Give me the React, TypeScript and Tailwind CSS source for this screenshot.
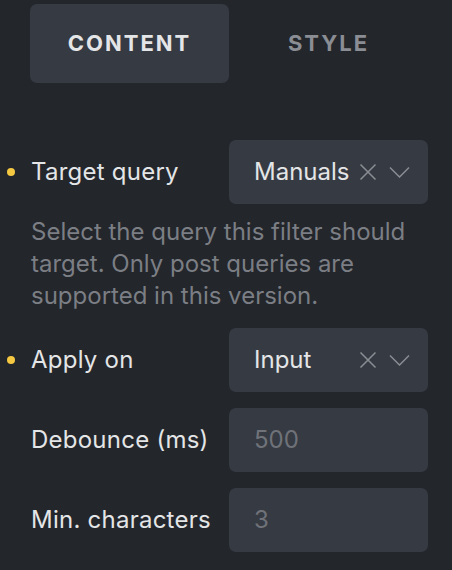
import * as React from 'react'

const XIcon = () => (
  <svg width="18" height="18" viewBox="0 0 18 18" fill="none" stroke="currentColor" strokeWidth="1.5">
    <path d="M1.5 1.5 L16.5 16.5 M16.5 1.5 L1.5 16.5" />
  </svg>
)

const ChevronIcon = () => (
  <svg width="21" height="12" viewBox="0 0 21 12" fill="none" stroke="currentColor" strokeWidth="1.5">
    <path d="M1 1.5 L10.5 11 L20 1.5" />
  </svg>
)

type RowProps = {
  label: string
  dot?: boolean
  children: React.ReactNode
}

const Row = ({ label, dot, children }: RowProps) => (
  <div className="flex items-center">
    <div className="relative flex w-[229px] shrink-0 items-center pl-[31px]">
      {dot && <span className="absolute left-[7px] h-[8px] w-[8px] rounded-full bg-[#f5c842]" />}
      <span className="text-[24px] tracking-[0.01em] text-[#e4e5e7]">{label}</span>
    </div>
    {children}
  </div>
)

const Select = ({ value }: { value: string }) => (
  <div className="flex h-[64px] w-[199px] shrink-0 items-center rounded-[7px] bg-[#363a42] pl-[25px] pr-[18px]">
    <span className="flex-1 text-[24px] text-[#e4e5e7]">{value}</span>
    <span className="mr-[12px] text-[#8a8d93]">
      <XIcon />
    </span>
    <span className="text-[#8a8d93]">
      <ChevronIcon />
    </span>
  </div>
)

const NumberInput = ({ placeholder }: { placeholder: string }) => (
  <div className="flex h-[64px] w-[199px] shrink-0 items-center rounded-[7px] bg-[#363a42] pl-[25px]">
    <span className="text-[24px] text-[#6f7279]">{placeholder}</span>
  </div>
)

export default function App() {
  return (
    <div
      className="h-[570px] w-[452px] overflow-hidden bg-[#23262b]"
      style={{ fontFamily: 'Inter, "Noto Sans", sans-serif' }}
    >
      <div className="flex pl-[30px] pt-[4px]">
        <div className="flex h-[79px] w-[199px] shrink-0 items-center justify-center rounded-[7px] bg-[#363a42]">
          <span className="text-[22px] font-bold tracking-[0.09em] text-[#e4e5e7]">CONTENT</span>
        </div>
        <div className="flex h-[79px] w-[199px] shrink-0 items-center justify-center">
          <span className="text-[22px] font-bold tracking-[0.09em] text-[#8a8d93]">STYLE</span>
        </div>
      </div>

      <div className="mt-[57px] flex flex-col">
        <Row label="Target query" dot>
          <Select value="Manuals" />
        </Row>
        <p className="mt-[12px] w-[428px] pl-[31px] text-[24px] leading-[32px] text-[#7b7e84]">
          Select the query this filter should target. Only post queries are supported in this version.
        </p>
        <div className="mt-[16px] flex flex-col gap-[16px]">
          <Row label="Apply on" dot>
            <Select value="Input" />
          </Row>
          <Row label="Debounce (ms)">
            <NumberInput placeholder="500" />
          </Row>
          <Row label="Min. characters">
            <NumberInput placeholder="3" />
          </Row>
        </div>
      </div>
    </div>
  )
}
